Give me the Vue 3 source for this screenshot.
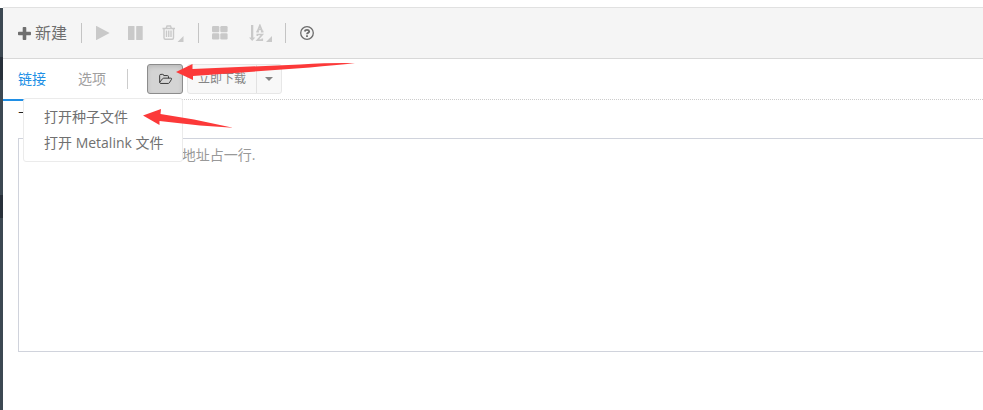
<script setup>
import { ref } from 'vue'

const tab = ref('links')
const links = ref('')
</script>

<template>
  <div class="page">
    <aside class="rail"><i class="mark first"></i><i class="mark second"></i></aside>
    <main class="main">
      <nav class="toolbar" aria-label="Toolbar">
        <button class="tool create" type="button">
          <svg width="13" height="13" viewBox="0 0 13 13"><path d="M5.500 0h2q.8 0 .8.8v3.900h3.900q.8 0 .8.8v2q0 .8-.8.8H8.300v3.900q0 .8-.8.8h-2q-.8 0-.8-.8V8.300H.8Q0 8.300 0 7.500v-2q0-.8.8-.8h3.900V.8q0-.8.8-.8z" /></svg>
          <span>新建</span>
        </button>
        <div class="group">
          <button class="tool" type="button" aria-label="Start" disabled>
            <svg width="14" height="16" viewBox="0 0 14 16"><path d="M0 1.300v13.400q0 .6.500.3L13.200 8.300q.5-.3 0-.6L.5 1Q0 .7 0 1.300z" /></svg>
          </button>
          <button class="tool" type="button" aria-label="Pause" disabled>
            <svg width="15" height="16" viewBox="0 0 15 16"><rect y="1" width="6.500" height="14" rx=".6" /><rect x="8.200" y="1" width="6.500" height="14" rx=".6" /></svg>
          </button>
          <button class="tool" type="button" aria-label="Delete" disabled>
            <svg width="23" height="18" viewBox="0 0 23 18">
              <path fill="none" stroke="currentColor" stroke-width="1.400" d="M1.500 4.500h12.500M5.200 4.300l.8-2.300h3.500l.8 2.300M3 4.500v9.200q0 1.500 1.300 1.500h7q1.200 0 1.200-1.500V4.500M5.500 6.500v6.500M7.750 6.500v6.500M10 6.500v6.500" />
              <path d="M22.500 12v6h-6z" />
            </svg>
          </button>
        </div>
        <div class="group views">
          <button class="tool" type="button" aria-label="Layout" disabled>
            <svg width="16" height="16" viewBox="0 0 16 16"><rect y="1" width="7.300" height="6.300" rx="1.200" /><rect x="8.300" y="1" width="7.300" height="6.300" rx="1.200" /><rect y="8.200" width="7.300" height="6.300" rx="1.200" /><rect x="8.300" y="8.200" width="7.300" height="6.300" rx="1.200" /></svg>
          </button>
          <button class="tool" type="button" aria-label="Sort" disabled>
            <svg width="24" height="18" viewBox="0 0 24 18">
              <path d="M3 1h2.300v12.500h2L4.200 17 1 13.500h2z" />
              <path fill="none" stroke="currentColor" stroke-width="1.600" d="M9.500 7.400l2.400-6 2.400 6M10.300 5.500h3.200M8.300 7.600h2.600M12.900 7.600h2.600M9.300 12v-1.500h5l-5 5.600h5v-1.700" />
              <path d="M24 12v6h-6z" />
            </svg>
          </button>
        </div>
        <div class="group">
          <button class="tool help" type="button" aria-label="Help">
            <svg width="14" height="16" viewBox="0 0 14 16"><circle cx="7" cy="8" r="6.300" fill="none" stroke="currentColor" stroke-width="1.300" /><path fill="none" stroke="currentColor" stroke-width="1.800" d="M4.700 6.500Q5 4.800 7 4.800t2.200 1.600Q9.200 7.300 8 7.900 7 8.400 7 9.300" /><path d="M6.100 10.200h1.800v1.700H6.100z" /></svg>
          </button>
        </div>
      </nav>

      <div class="tabs">
        <button class="tab" :class="{ active: tab === 'links' }" type="button" @click="tab = 'links'">链接</button>
        <button class="tab" :class="{ active: tab === 'options' }" type="button" @click="tab = 'options'">选项</button>
        <div class="actions">
          <div class="open">
            <button class="folder" type="button" aria-label="Open" aria-expanded="true">
              <svg width="15" height="12" viewBox="0 0 16 14"><path d="M1.200 11V3q0-1.400 1.400-1.400h2.200q1.200 0 1.200 1.400h4.200q1.300 0 1.300 1.300V6M1.200 11q.2 1.200 1.500 1.200h8.300q.9 0 1.500-.7l2.500-4.200Q15.500 6 14.200 6H6q-1 0-1.600.8L1.200 11" fill="none" stroke="currentColor" stroke-width="1.100" stroke-linejoin="round" /></svg>
            </button>
            <div class="menu">
              <a href="#torrent">打开种子文件</a>
              <a href="#metalink">打开 Metalink 文件</a>
            </div>
          </div>
          <div class="split">
            <button type="button" disabled>立即下载</button>
            <button class="caret" type="button" aria-label="More" disabled><svg width="8" height="4" viewBox="0 0 8 4"><path d="M0 0h8L4 4z" /></svg></button>
          </div>
        </div>
      </div>

      <div class="form">
        <label for="urls">下载链接:</label>
        <textarea id="urls" v-model="links" placeholder="支持多个 URL 地址, 每个地址占一行."></textarea>
      </div>
    </main>

    <svg class="arrows" width="360" height="140" viewBox="0 0 360 140" aria-hidden="true">
      <path d="M176 72L192.500 64 192.500 69 300 64.500Q335 62.500 355 63.200 335 65 310 67.500L193 76V80z" />
      <path d="M143 115.500L161 109 160.500 114 194 119.500 233 127.800 200 125.500 159.500 121V125z" />
    </svg>
  </div>
</template>

<style>
body { margin: 0; background: #fff; }
</style>

<style scoped>
.page {
  position: relative;
  display: flex;
  min-height: 100vh;
  padding-top: 7px;
  box-sizing: border-box;
  overflow: hidden;
  font: 14px/20px "Open Sans", "Noto Sans CJK SC", sans-serif;
  color: #666;
}
.rail { width: 3px; margin-top: 1px; background: #3c4852; }
.mark { display: block; height: 23px; background: #28303a; }
.first { margin-top: 49px; }
.second { margin-top: 115px; }
.main { flex: 1; min-width: 0; }
button { font: inherit; color: inherit; margin: 0; padding: 0; border: 0; background: none; }
svg { display: block; fill: currentColor; }
.toolbar {
  display: flex;
  align-items: center;
  height: 50px;
  padding-left: 15px;
  background: #f5f5f5;
  border-top: 1px solid #e1e1e1;
  border-bottom: 1px solid #d8d8d8;
}
.tool { color: #c9c9c9; }
.create { display: flex; align-items: center; gap: 4px; width: 49px; margin-right: 14px; font-size: 16px; white-space: nowrap; color: #6f6f6f; }
.group { display: flex; align-items: center; gap: 18px; height: 20px; padding: 0 14px; border-left: 1px solid #c4c4c4; }
.views { gap: 20px; padding: 0 13px; }
.help { color: #6c6c6c; }
.tabs { display: flex; align-items: flex-start; gap: 2px; height: 40px; border-bottom: 1px dotted #ccc; }
.tab { height: 42px; padding: 0 15px; border-bottom: 2px solid transparent; color: #a0a0a0; }
.tab.active { color: #208fe5; border-color: #208fe5; }
.actions { display: flex; align-items: center; gap: 4px; margin: 5px 0 0 4px; }
.actions::before { content: ""; width: 1px; height: 20px; margin-right: 15px; background: #ccc; }
.open { position: relative; }
.folder { display: flex; align-items: center; justify-content: center; width: 36px; height: 30px; border: 1px solid #8c8c8c; border-radius: 3px; background: #d4d4d4; box-shadow: inset 0 2px 4px rgba(0, 0, 0, 0.12); color: #333; }
.menu {
  position: absolute;
  z-index: 2;
  top: 100%;
  right: 0;
  width: 160px;
  margin-top: 4px;
  padding: 5px 0;
  box-sizing: border-box;
  background: #fff;
  border: 1px solid #ebebeb;
  border-radius: 3px;
}
.menu a { display: block; padding: 0 20px; line-height: 26px; color: #707070; text-decoration: none; white-space: nowrap; }
.split { display: flex; height: 28px; border: 1px solid #e7e7e7; border-radius: 3px; background: #f8f8f8; font-size: 12px; color: #858585; }
.split button { padding: 0 10px; }
.split .caret { width: 25px; padding: 0 8px; border-left: 1px solid #e2e2e2; }
.form { padding: 8px 0 0 15px; }
label { display: block; height: 30px; color: #222; }
textarea {
  display: block;
  width: 100%;
  height: 214px;
  padding: 6px 10px;
  box-sizing: border-box;
  border: 1px solid #d0d3dc;
  border-right: 0;
  border-radius: 0;
  resize: none;
  outline: 0;
  background: #fff;
  font: inherit;
  color: #555;
}
textarea::placeholder { color: #999; opacity: 1; }
.arrows { position: absolute; z-index: 3; top: 0; left: 0; fill: #fc3939; pointer-events: none; }
</style>
